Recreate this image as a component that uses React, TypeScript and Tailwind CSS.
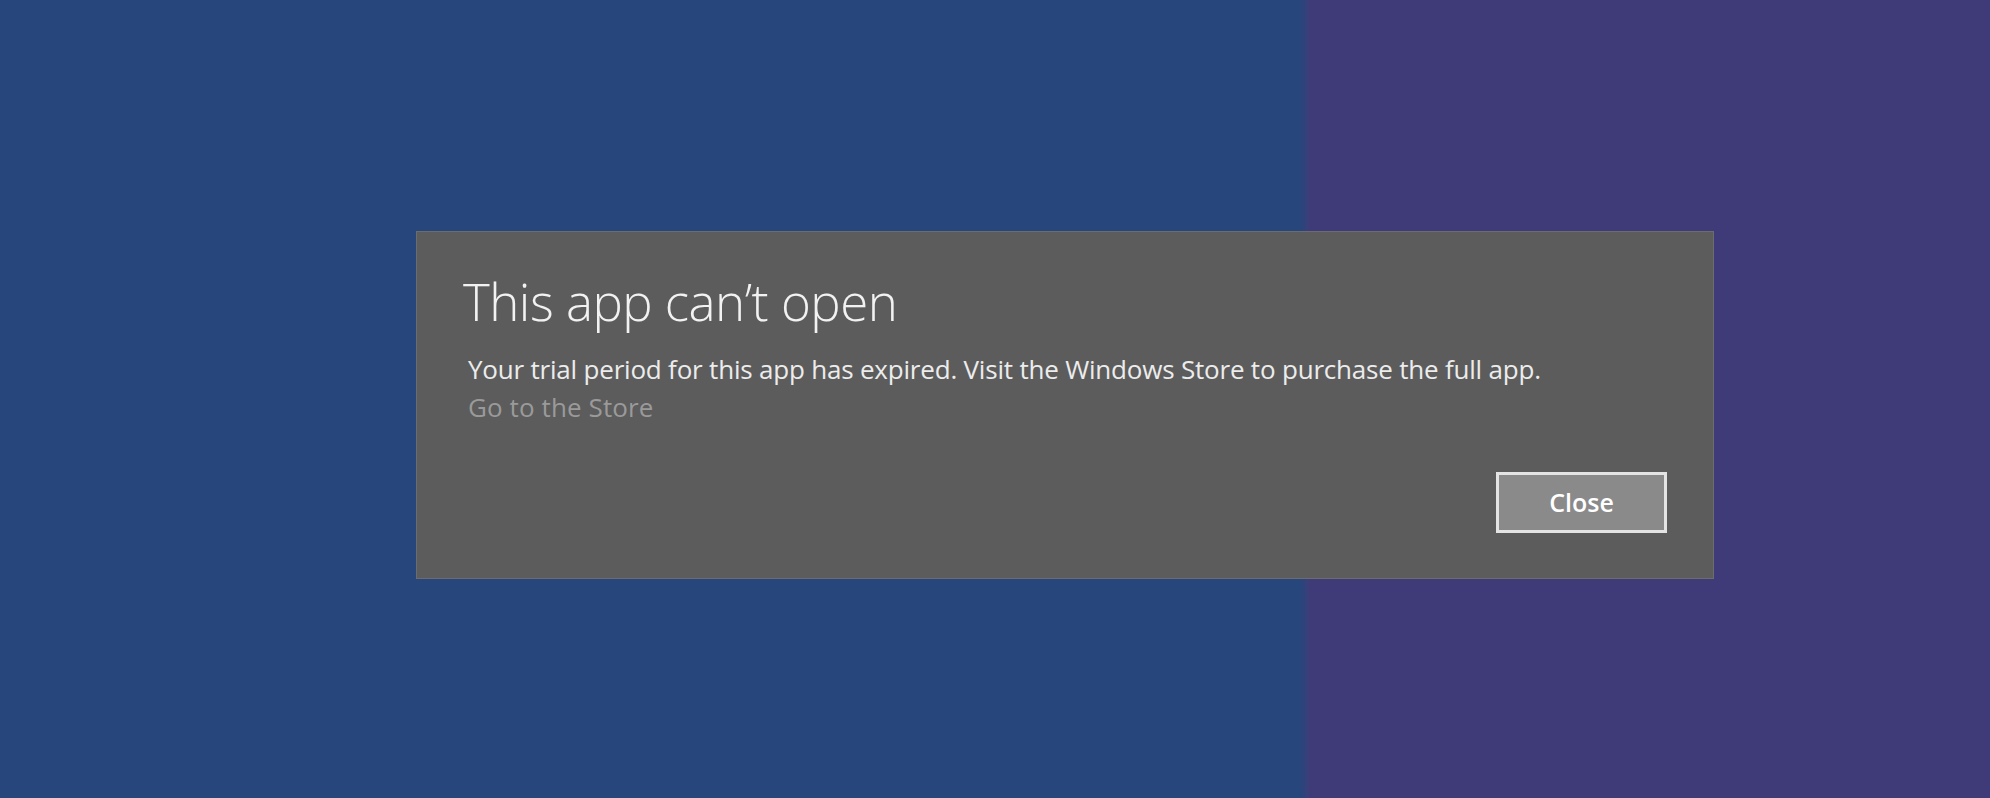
export default function App() {
	return (
		<div className="w-[1990px] h-[798px] overflow-hidden bg-[linear-gradient(to_right,#26467c_1300px,#3a3f7a_1308px,#3e3b78_1310px)] pt-[231px] pl-[416px] font-['Open_Sans',sans-serif]">
			{/* dialog */}
			<div className="w-[1298px] h-[348px] bg-[#5c5c5c] border border-[#6b6b72] flex flex-col px-[46px] pt-[33px] pb-[45px]">
				<h1 className="text-[51px] leading-[72px] font-light text-[#f2f2f2] tracking-[-0.5px]">
					This app can’t open
				</h1>
				<p className="mt-[13px] ml-[5px] text-[26px] leading-[38px] text-[#ececec] tracking-[-0.2px]">
					Your trial period for this app has expired. Visit the Windows Store to purchase the full app.
				</p>
				<a className="ml-[5px] text-[26px] leading-[38px] text-[#9a9a9a] tracking-[0.1px] self-start cursor-pointer">
					Go to the Store
				</a>
				<div className="mt-auto flex justify-end">
					<button className="w-[171px] h-[61px] border-[3px] border-[#e4e4e4] bg-[#8a8a8a] text-white text-[25px] font-semibold">
						Close
					</button>
				</div>
			</div>
		</div>
	);
}
